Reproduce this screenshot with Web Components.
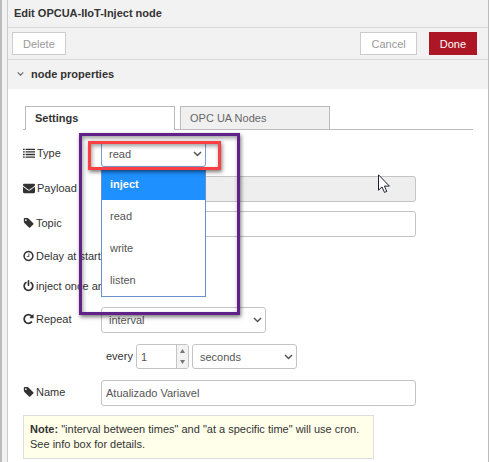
<!DOCTYPE html>
<html lang="en">
<head>
<meta charset="utf-8">
<title>Edit OPCUA-IIoT-Inject node</title>
<style>
html, body { margin: 0; min-height: 100%; background: #fff; }
body { font: 11px/16px "Liberation Sans", Arial, sans-serif; color: #333; }
</style>
</head>
<body>
<edit-tray>
  <tray-title>Edit OPCUA-IIoT-Inject node</tray-title>
  <tray-toolbar></tray-toolbar>
  <section-title>node properties</section-title>
  <tab-bar></tab-bar>
  <node-form>
    <type-row></type-row>
    <text-row icon="envelope" label="Payload" disabled></text-row>
    <text-row icon="tag" label="Topic"></text-row>
    <label-row icon="clock">Delay at start</label-row>
    <label-row icon="power">inject once and</label-row>
    <repeat-rows></repeat-rows>
    <text-row icon="tag" label="Name" value="Atualizado Variavel"></text-row>
    <note-box><b>Note:</b> "interval between times" and "at a specific time" will use cron.<br>See info box for details.</note-box>
  </node-form>
  <mouse-pointer slot="overlay"></mouse-pointer>
</edit-tray>
<script>
const define = (name, html, setup) => customElements.define(name, class extends HTMLElement {
  constructor() {
    super();
    const t = document.createElement('template');
    t.innerHTML = typeof html === 'function' ? html(this) : html;
    this.attachShadow({ mode: 'open' }).append(t.content.cloneNode(true));
    if (setup) setup(this);
  }
});

const paths = {
  list: 'M0 256h256v192H0zM384 256h1408v192H384zM0 640h256v192H0zM384 640h1408v192H384zM0 1024h256v192H0zM384 1024h1408v192H384zM0 1408h256v192H0zM384 1408h1408v192H384z',
  envelope: 'M1792 710v794q0 66-47 113t-113 47h-1472q-66 0-113-47t-47-113v-794q44 49 101 87 362 246 497 345 57 42 92.5 65.5t94.5 48 110 24.5h2q51 0 110-24.500t94.500-48 92.500-65.500q170-123 498-345 57-39 100-87zm0-294q0 79-49 151t-122 123q-376 261-468 325-10 7-42.500 31t-54 38.500-52 32.500-57.500 27-50 9h-2q-23 0-50-9t-57.500-27-52-32.500-54-38.500-42.500-31q-91-64-262-182.500t-205-142.500q-62-42-117-115.500t-55-136.500q0-78 41.500-130t118.500-52h1472q65 0 112.500 47t47.500 113z',
  tag: 'M576 448q0-53-37.500-90.500t-90.500-37.500-90.500 37.500-37.500 90.500 37.500 90.500 90.500 37.500 90.500-37.500 37.500-90.500zm1067 576q0 53-37 90l-491 492q-39 37-91 37-53 0-90-37l-715-716q-38-37-64.500-101t-26.500-117v-416q0-52 38-90t90-38h416q53 0 117 26.500t102 64.500l715 714q37 39 37 91z',
  clock: 'M1024 544v448q0 14-9 23t-23 9h-320q-14 0-23-9t-9-23v-64q0-14 9-23t23-9h224v-352q0-14 9-23t23-9h64q14 0 23 9t9 23zm416 352q0-148-73-273t-198-198-273-73-273 73-198 198-73 273 73 273 198 198 273 73 273-73 198-198 73-273zm224 0q0 209-103 385.500t-279.500 279.500-385.500 103-385.500-103-279.500-279.500-103-385.500 103-385.500 279.500-279.500 385.500-103 385.500 103 279.500 279.500 103 385.500z',
  power: 'M1664 896q0 156-61 298t-164 245-245 164-298 61-298-61-245-164-164-245-61-298q0-182 80.500-343t226.500-270q43-32 95.500-25t83.500 50q32 42 24.500 94.500t-49.500 84.500q-98 74-151.500 181t-53.500 228q0 104 40.500 198.500t109.500 163.500 163.500 109.500 198.500 40.500 198.500-40.500 163.500-109.500 109.500-163.500 40.500-198.500q0-121-53.500-228t-151.500-181q-42-32-49.500-84.500t24.500-94.500q31-43 84-50t95 25q146 109 226.500 270t80.500 343zm-640-768v640q0 52-38 90t-90 38-90-38-38-90v-640q0-52 38-90t90-38 90 38 38 90z',
  repeat: 'M1664 256v448q0 26-19 45t-45 19h-448q-42 0-59-40-17-39 14-69l138-138q-148-137-349-137-104 0-198.500 40.500t-163.500 109.500-109.500 163.500-40.500 198.500 40.500 198.500 109.500 163.500 163.500 109.500 198.500 40.500q119 0 225-52t179-147q7-10 23-12 15 0 25 9l137 138q9 8 9.500 20.500t-7.500 22.500q-109 132-264 204.500t-327 72.500q-156 0-298-61t-245-164-164-245-61-298 61-298 164-245 245-164 298-61q147 0 284.500 55.500t244.500 156.500l130-129q29-31 70-14 39 17 39 59z'
};
const glyph = n => {
  const wide = n === 'list' || n === 'envelope';
  const box = wide ? '0 0 1792 1792' : n === 'tag' ? '0 0 1720 1792' : '100 0 1600 1792';
  return `<svg class="icon${wide ? ' wide' : ''}" viewBox="${box}" aria-hidden="true"><path d="${paths[n]}"/></svg>`;
};
const chevron = '<svg class="chev" viewBox="0 0 9 6" aria-hidden="true"><path d="M1 1l3.500 3.500L8 1"/></svg>';

const shared = `<style>
  * { box-sizing: border-box; }
  :host { display: block; }
  .row { display: grid; grid-template-columns: 78px minmax(0, 1fr); align-items: center; }
  label, .label { display: flex; align-items: center; gap: 2px; white-space: nowrap; padding-bottom: 2px; }
  .icon { width: 11px; height: 12px; fill: #333; flex: none; }
  .icon.wide { width: 12px; }
  input, select { font: inherit; color: #555; background: #fff; border: 1px solid #c4c4c4; border-radius: 3px; height: 26px; width: 100%; margin: 0; padding: 0 4px; outline: 0; min-width: 0; }
  select { appearance: none; padding: 0 7px; }
  .pick { display: grid; align-items: center; }
  .pick > * { grid-area: 1 / 1; }
  .chev { width: 9px; height: 6px; justify-self: end; margin-right: 4px; fill: none; stroke: #555; stroke-width: 1.500; pointer-events: none; }
</style>`;

define('edit-tray', `<style>
  :host { display: grid; grid-template-columns: 8px minmax(0, 1fr) 1px; min-height: 100vh; position: relative; }
  .rail { background: linear-gradient(90deg, #bbb 2px, #f2f2f2 2px 7px, #ccc 7px); }
  .edge { background: #bbb; }
</style><div class="rail"></div><main><slot></slot></main><div class="edge"></div><slot name="overlay"></slot>`);

define('tray-title', `<style>
  :host { display: block; background: #f2f2f2; border-bottom: 1px solid #d9d9d9; padding: 5px 6px 6px; color: #333; }
  h1 { font: bold 11px/16px "Liberation Sans", Arial, sans-serif; margin: 0; }
</style><h1><slot></slot></h1>`);

define('tray-toolbar', `<style>
  :host { display: flex; align-items: center; gap: 12px; background: #f2f2f2; border-bottom: 1px solid #d9d9d9; padding: 4px 11px 4px 4px; }
  button { font: inherit; height: 23px; border: 1px solid #ccc; background: #fff; color: #999; padding: 0 10px; border-radius: 0; }
  .del { margin-right: auto; }
  .done { background: #ad1625; border-color: #ad1625; color: #fff; }
</style><button class="del" type="button">Delete</button><button type="button">Cancel</button><button class="done" type="button">Done</button>`);

define('section-title', shared + `<style>
  :host { display: flex; align-items: center; gap: 7px; background: #f2f2f2; padding: 6px 9px 7px; }
  h2 { font: bold 11px/16px "Liberation Sans", Arial, sans-serif; margin: 0; }
  .chev { width: 7px; margin: 0; stroke: #666; }
</style>${chevron}<h2><slot></slot></h2>`);

define('tab-bar', `<style>
  :host { display: flex; gap: 5px; margin: 17px 15px 0; padding-left: 2px; background: linear-gradient(#bbb, #bbb) bottom / 100% 1px no-repeat; }
  button { box-sizing: border-box; flex: 0 0 150px; height: 24px; font: inherit; text-align: left; padding: 0 9px; border: 1px solid #bbb; border-radius: 0; background: #f0f0f0; color: #666; }
  .on { background: #fff; border-bottom-color: #fff; color: #333; font-weight: bold; }
</style><button class="on" type="button">Settings</button><button type="button">OPC UA Nodes</button>`);

define('node-form', `<style>
  :host { display: flex; flex-direction: column; gap: 9px; padding: 11px 15px 4px; }
</style><slot></slot>`);

define('type-row', shared + `<style>
  .anchor { position: relative; width: 105px; }
  select { border-color: #7a9fd8; }
  ul { position: absolute; z-index: 2; top: 26px; left: 0; width: 100%; margin: 0; padding: 0; list-style: none; background: #fff; border: 1px solid #6a8fd0; border-top: 0; }
  li { height: 32px; padding: 0 8px; line-height: 32px; color: #555; }
  li[aria-selected=true] { height: 33px; line-height: 34px; background: #1e90ff; color: #fff; font-weight: bold; }
  .mark { position: absolute; pointer-events: none; }
  .purple { z-index: 3; left: -22px; top: -8px; width: 161px; height: 182px; border: 3px solid #602188; box-shadow: 1px 2px 4px #0008, inset 1px 2px 4px #0006; }
  .red { z-index: 4; left: -13px; top: 0; width: 133px; height: 29px; border: 3px solid #fb3f42; box-shadow: 1px 2px 4px #0008, inset 1px 2px 4px #0006; }
</style><div class="row"><label for="type">${glyph('list')}Type</label>
<div class="anchor"><div class="pick"><select id="type"><option>inject</option><option selected>read</option><option>write</option><option>listen</option></select>${chevron}</div>
<ul role="listbox" aria-label="Type"><li role="option" aria-selected="true">inject</li><li role="option">read</li><li role="option">write</li><li role="option">listen</li></ul>
<div class="mark purple"></div><div class="mark red"></div></div></div>`);

define('text-row', el => shared + `<style>
  input { width: calc(100% - 57px); }
  input:disabled { background: #eee; }
</style><div class="row"><label for="field">${glyph(el.getAttribute('icon'))}${el.getAttribute('label')}</label>
<input id="field" type="text" value="${el.getAttribute('value') || ''}" ${el.hasAttribute('disabled') ? 'disabled' : ''}></div>`);

define('label-row', el => shared + `<style>.label { height: 21px; width: 80px; overflow: hidden; }</style><div class="label">${glyph(el.getAttribute('icon'))}<span><slot></slot></span></div>`);

define('repeat-rows', shared + `<style>
  :host { display: flex; flex-direction: column; gap: 11px; margin: 1px 0 2px; }
  .repeat { width: 165px; }
  .every { display: flex; align-items: center; gap: 3px; padding-left: 83px; }
  .num { display: flex; width: 53px; height: 25px; border: 1px solid #c4c4c4; border-radius: 3px; overflow: hidden; }
  .num input { border: 0; height: 100%; flex: 1; appearance: textfield; }
  .num input::-webkit-inner-spin-button { appearance: none; }
  .spin { display: grid; width: 12px; border-left: 1px solid #c4c4c4; background: #f2f2f2; }
  .spin button { display: grid; place-items: center; padding: 0; border: 0; background: none; }
  .spin svg { width: 5px; height: 4px; fill: #777; }
  .unit { width: 105px; }
  .unit select { height: 25px; }
</style><div class="row"><label for="repeat">${glyph('repeat')}Repeat</label><div class="pick repeat"><select id="repeat"><option>interval</option></select>${chevron}</div></div>
<div class="every"><label for="count">every</label><div class="num"><input id="count" type="number" value="1"><div class="spin"><button type="button" aria-label="Increase"><svg viewBox="0 0 5 4"><path d="M0 4L2.500 0 5 4z"/></svg></button><button type="button" aria-label="Decrease"><svg viewBox="0 0 5 4"><path d="M0 0L2.500 4 5 0z"/></svg></button></div></div>
<div class="pick unit"><select aria-label="Unit"><option>seconds</option></select>${chevron}</div></div>`);

define('note-box', `<style>
  :host { display: block; box-sizing: border-box; width: 78%; padding: 6px; border: 1px solid #ddd; background: #ffffea; line-height: 15px; color: #333; white-space: nowrap; }
</style><slot></slot>`);

define('mouse-pointer', `<style>
  :host { position: absolute; z-index: 5; left: 378px; top: 174px; width: 12px; height: 19px; pointer-events: none; }
  svg { display: block; width: 100%; height: 100%; }
</style><svg viewBox="0 0 12 19" aria-hidden="true"><path d="M.5.8v15.400l3.500-3.300 2.500 5.500 2.300-1-2.400-5.300h5z" fill="#fff" stroke="#223"/></svg>`);
</script>
</body>
</html>
